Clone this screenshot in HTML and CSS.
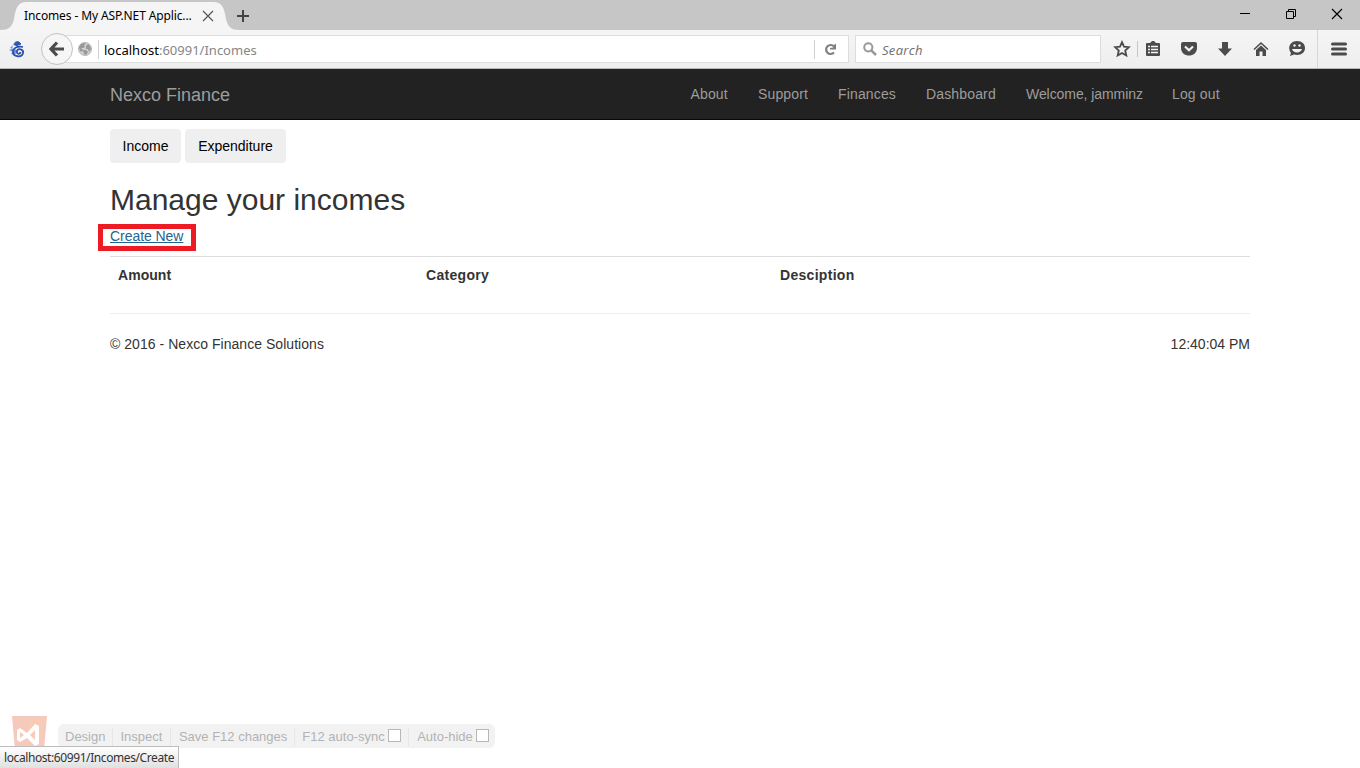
FILE: index.html
```
<!DOCTYPE html>
<html lang="en">
<head>
<meta charset="utf-8">
<title>Incomes - My ASP.NET Application</title>
<link rel="stylesheet" href="styles.css">
</head>
<body>
<div class="window">
  <header class="titlebar">
    <div class="tab">
      <svg class="tab-shape" width="240" height="30" viewBox="0 0 240 30"><path d="M0 30 C9 30 12 27 14 19 C16 7 18 2 27 2 H213 C222 2 224 7 226 19 C228 27 231 30 240 30 Z" fill="#f5f5f5"/></svg>
      <span class="tab-title">Incomes - My ASP.NET Applic...</span>
      <svg class="tab-close" width="12" height="12" viewBox="0 0 12 12"><path d="M1 1 11 11M11 1 1 11" stroke="#555" stroke-width="1.2" fill="none"/></svg>
    </div>
    <svg class="new-tab" width="14" height="14" viewBox="0 0 14 14"><path d="M7 1V13M1 7H13" stroke="#444" stroke-width="2"/></svg>
    <div class="controls">
      <svg width="12" height="12" viewBox="0 0 12 12"><path d="M1 5.5H11" stroke="#000"/></svg>
      <svg width="12" height="12" viewBox="0 0 12 12"><path d="M1.5 3.5H8.5V10.5H1.5ZM3.5 3.5V1.5H10.5V8.5H8.5" fill="none" stroke="#000"/></svg>
      <svg width="12" height="12" viewBox="0 0 12 12"><path d="M1 1 11 11M11 1 1 11" stroke="#000" stroke-width="1.2"/></svg>
    </div>
  </header>
  <div class="toolbar">
    <svg class="dragon" width="16" height="17" viewBox="0 0 16 17"><path d="M1 7 4 4 3 8 0 9 4 11 2 13 6 14 8 9Z" fill="#6d8ed5"/><path d="M5 4C5 1 8 0 10 1L12 3 10 4 8 4 9 6" fill="#3159b0" stroke="#3159b0"/><path d="M14 6C10 5 4 6 4 11C4 16 13 17 14 12C15 8 9 7 8 10C7 13 11 14 11.500 11" fill="none" stroke="#2950b2" stroke-width="1.800"/></svg>
    <div class="address">
      <div class="back"><svg width="16" height="16" viewBox="0 0 16 16"><path d="M8 1.500 2 8l6 6.500M2.500 8H15" fill="none" stroke="#4b4b4b" stroke-width="3.200"/></svg></div>
      <svg class="globe" width="14" height="14" viewBox="0 0 14 14"><circle cx="7" cy="7" r="6.500" fill="#d0d0d0" stroke="#b5b5b5"/><path d="M1 5 3 2 6 1 8 2 6 3 7 5 5 6 3 6 5 8 4 10 2 9ZM8 4 10 2 12 4 13 7 11 10 10 7 8 7ZM5 8 8 8 10 10 8 13 6 12Z" fill="#999"/></svg>
      <span class="divider"></span>
      <span class="url"><b>localhost</b>:60991/Incomes</span>
      <span class="divider reload-line"></span>
      <svg class="reload" width="13" height="13" viewBox="0 0 13 13"><path d="M10 3.500A4.500 4.500 0 1 0 10 9.500" fill="none" stroke="#808080" stroke-width="2.200"/><path d="M12 0.500V6.500H6V5L9 4.500 10 2Z" fill="#808080"/></svg>
    </div>
    <div class="search">
      <svg width="14" height="14" viewBox="0 0 14 14"><circle cx="5.300" cy="5.300" r="4.100" fill="none" stroke="#999" stroke-width="2"/><path d="M8.300 8.300 13 13" stroke="#999" stroke-width="2.600"/></svg>
      <span>Search</span>
    </div>
    <div class="tools">
      <svg width="18" height="18" viewBox="0 0 18 18"><path d="M9 2.200 11 6.700 15.800 7.200 12.200 10.500 13.300 15.500 9 13 4.700 15.500 5.800 10.500 2.200 7.200 7 6.700Z" fill="none" stroke="#4b4b4b" stroke-width="1.800"/></svg>
      <svg width="18" height="18" viewBox="0 0 18 18"><path d="M3 3H6L8 1H10L12 3H15Q16 3 16 4V15Q16 16 15 16H3Q2 16 2 15V4Q2 3 3 3Z" fill="#4b4b4b"/><path d="M4 6.500H6M7 6.500H14M4 9.500H6M7 9.500H14M4 12.500H6M7 12.500H14" stroke="#f3f3f3" stroke-width="1.700"/></svg>
      <svg width="18" height="18" viewBox="0 0 18 18"><path d="M3 2H15Q17 2 17 4V8C17 18 1 18 1 8V4Q1 2 3 2Z" fill="#4b4b4b"/><path d="M5 6.500 9 10.300 13 6.500" fill="none" stroke="#f3f3f3" stroke-width="2.200"/></svg>
      <svg width="18" height="18" viewBox="0 0 18 18"><path d="M6 2H12V8.500H16L9 16 2 8.500H6Z" fill="#4b4b4b"/></svg>
      <svg width="18" height="18" viewBox="0 0 18 18"><path d="M2 9.500 9 3 16 9.500" fill="none" stroke="#4b4b4b" stroke-width="1.600"/><path d="M9 5.500 14 10V16H10.500V11.500H7.500V16H4V10Z" fill="#4b4b4b"/></svg>
      <svg width="18" height="18" viewBox="0 0 18 18"><path d="M9 1C14 1 17 4 17 8S14 15 9 15L6 14.500 2 16 3 13C-1 8 2 1 9 1Z" fill="#4b4b4b"/><path d="M4 9H14C13 13.500 5 13.500 4 9Z" fill="#f3f3f3"/><circle cx="6.500" cy="5.500" r="1.200" fill="#f3f3f3"/><circle cx="11.500" cy="5.500" r="1.200" fill="#f3f3f3"/></svg>
      <span class="bookmark-line"></span>
    </div>
    <div class="menu"><svg width="16" height="14" viewBox="0 0 16 14"><path d="M1.500 2H14.500M1.500 7H14.500M1.500 12H14.500" stroke="#4b4b4b" stroke-width="3" stroke-linecap="round"/></svg></div>
  </div>
  <nav class="navbar">
    <div class="container">
      <a class="brand">Nexco Finance</a>
      <div class="links"><a>About</a><a>Support</a><a>Finances</a><a>Dashboard</a><a class="welcome">Welcome, jamminz</a><a>Log out</a></div>
    </div>
  </nav>
  <main class="container page">
    <div class="buttons"><a class="income">Income</a><a class="expenditure">Expenditure</a></div>
    <h2>Manage your incomes</h2>
    <p><a class="create">Create New</a></p>
    <div class="table"><b>Amount</b><b>Category</b><b>Desciption</b></div>
    <hr>
    <footer><span class="copyright">© 2016 - Nexco Finance Solutions</span><span>12:40:04 PM</span></footer>
  </main>
  <div class="browser-link">
    <svg width="36" height="40" viewBox="0 0 36 40"><path d="M0 0H35L32 34 17.500 39 3 34Z" fill="#f5c9bb"/><path d="M17.500 3H32L29.500 32 17.500 36Z" fill="#f8cbb6"/><path fill="#fff" fill-rule="evenodd" d="M5 14 8 12 15 17 23 8 27 10V28L23 30 15 22 8 26 5 24ZM8 16V22L12 19ZM23 14V24L18 19Z"/></svg>
    <div class="dev-bar"><span>Design</span><span>Inspect</span><span>Save F12 changes</span><span>F12 auto-sync<i></i></span><span>Auto-hide<i></i></span></div>
  </div>
  <div class="status"><span>localhost:60991/Incomes/Create</span></div>
</div>
</body>
</html>
```
FILE: styles.css
```
*, *::before, *::after { box-sizing: border-box; }
body { margin: 0; background: #fff; font: 14px/20px "Liberation Sans", Arial, sans-serif; color: #333; }
svg { display: block; flex: none; }
.window { position: relative; height: 768px; overflow: hidden; }
.titlebar { height: 30px; background: #c6c6c6; display: flex; align-items: flex-start; }
.tab { position: relative; width: 236px; height: 30px; display: flex; padding: 10px 0 0 24px; }
.tab-shape { position: absolute; left: 0; top: 0; }
.tab-title { position: relative; width: 170px; font: 12px/12px "Noto Sans", sans-serif; letter-spacing: -.12px; color: #000; white-space: nowrap; }
.tab-close { position: relative; margin-left: 8px; }
.new-tab { margin: 9px 0 0; }
.controls { display: flex; gap: 34px; margin: 8px 17px 0 auto; }
.toolbar { height: 39px; background: linear-gradient(#f5f5f5, #eee); border-bottom: 1px solid #b7b7b7; display: flex; align-items: center; padding-left: 9px; }
.dragon { margin-right: 16px; }
.address { width: 808px; height: 32px; display: flex; align-items: center; background: linear-gradient(#ddd, #ddd) 20px 2px/788px 28px no-repeat; position: relative; z-index: 0; }
.address::before { content: ""; position: absolute; z-index: -1; inset: 3px 1px 3px 20px; background: #fff; }
.back { width: 32px; height: 32px; flex: none; border: 1px solid #c3c3c3; border-radius: 50%; background: #f6f6f6; display: flex; align-items: center; justify-content: center; }
.globe { margin-left: 5px; }
.divider { width: 1px; height: 19px; background: #d0d0d0; margin-left: 6px; }
.url { font: 13px/20px "Noto Sans", sans-serif; color: #868686; margin: 2px 0 0 5px; white-space: nowrap; }
.url b { color: #000; font-weight: 400; }
.reload-line { margin-left: auto; }
.reload { margin: 0 12px 0 9px; }
.search { width: 246px; height: 28px; margin-left: 6px; background: #fff; border: 1px solid #ddd; display: flex; align-items: center; padding-left: 7px; font: italic 13px/20px "Open Sans", sans-serif; letter-spacing: .3px; color: #6e6e6e; }
.search span { margin: 2px 0 0 5px; }
.tools { position: relative; display: flex; gap: 18px; margin-left: 12px; }
.tools svg:first-child { margin-right: -5px; }
.bookmark-line { position: absolute; left: 24px; top: 1px; width: 1px; height: 16px; background: #c5c5c5; }
.menu { height: 38px; display: flex; align-items: center; margin-left: 11px; padding-left: 13px; border-left: 1px solid #d7d7d7; }
.navbar { height: 51px; background: #222; border-bottom: 1px solid #080808; color: #9d9d9d; }
.container { width: 1140px; margin: 0 auto; }
.navbar .container { display: flex; justify-content: space-between; padding-top: 15px; }
.brand { font-size: 18px; line-height: 22px; }
.links { display: grid; grid-template-columns: 67.5px 80px 88px 100px 146px 48px; margin-right: 30px; letter-spacing: .15px; white-space: nowrap; }
.welcome { letter-spacing: -.07px; }
.page { padding-top: 9px; }
.buttons { display: flex; gap: 4px; }
.buttons a { height: 34px; line-height: 34px; background: #efefef; border-radius: 4px; color: #000; text-align: center; }
.income { width: 71px; }
.expenditure { width: 101px; }
h2 { font-size: 30px; font-weight: 400; line-height: 33px; margin: 20px 0 10px; }
p { margin: 0 0 10px; }
.create { position: relative; color: #23648f; text-decoration: underline; letter-spacing: -.05px; }
.create::after { content: ""; position: absolute; left: -12px; top: -4px; width: 98px; height: 27px; border: 5px solid #ed1c24; }
.table { height: 37px; border-top: 1px solid #ddd; padding: 8px; display: grid; grid-template-columns: 308px 354px auto; letter-spacing: .3px; }
.table b:first-child { letter-spacing: .05px; }
hr { border: 0; border-top: 1px solid #eee; margin: 20px 0; }
footer { display: flex; justify-content: space-between; }
.copyright { letter-spacing: .04px; }
.browser-link { position: absolute; left: 12px; top: 716px; display: flex; gap: 10px; }
.dev-bar { margin-top: 8px; width: 437px; height: 24px; border-radius: 6px; background: #f2f2f2; color: #b2b2b2; font-size: 13px; line-height: 18px; display: flex; padding: 4px 0 2px; white-space: nowrap; }
.dev-bar span { padding: 0 7px; border-right: 1px solid #e6e6e6; display: flex; }
.dev-bar span:nth-child(2), .dev-bar span:nth-child(4) { padding-right: 7.5px; }
.dev-bar span:nth-child(3), .dev-bar span:nth-child(5) { padding-left: 8px; }
.dev-bar span:last-child { border: 0; }
.dev-bar i { width: 13px; height: 13px; background: #fff; border: 1px solid #b7b7b7; margin: 1px 0 0 3px; }
.status { position: absolute; left: 0; bottom: 0; width: 179px; height: 22px; border: 1px solid #bcbcbc; border-width: 1px 1px 0 0; background: linear-gradient(#fff, #e0e0e0); font: 12px/22px "Noto Sans", sans-serif; letter-spacing: -.41px; padding-left: 4px; white-space: nowrap; color: #333; }
```
